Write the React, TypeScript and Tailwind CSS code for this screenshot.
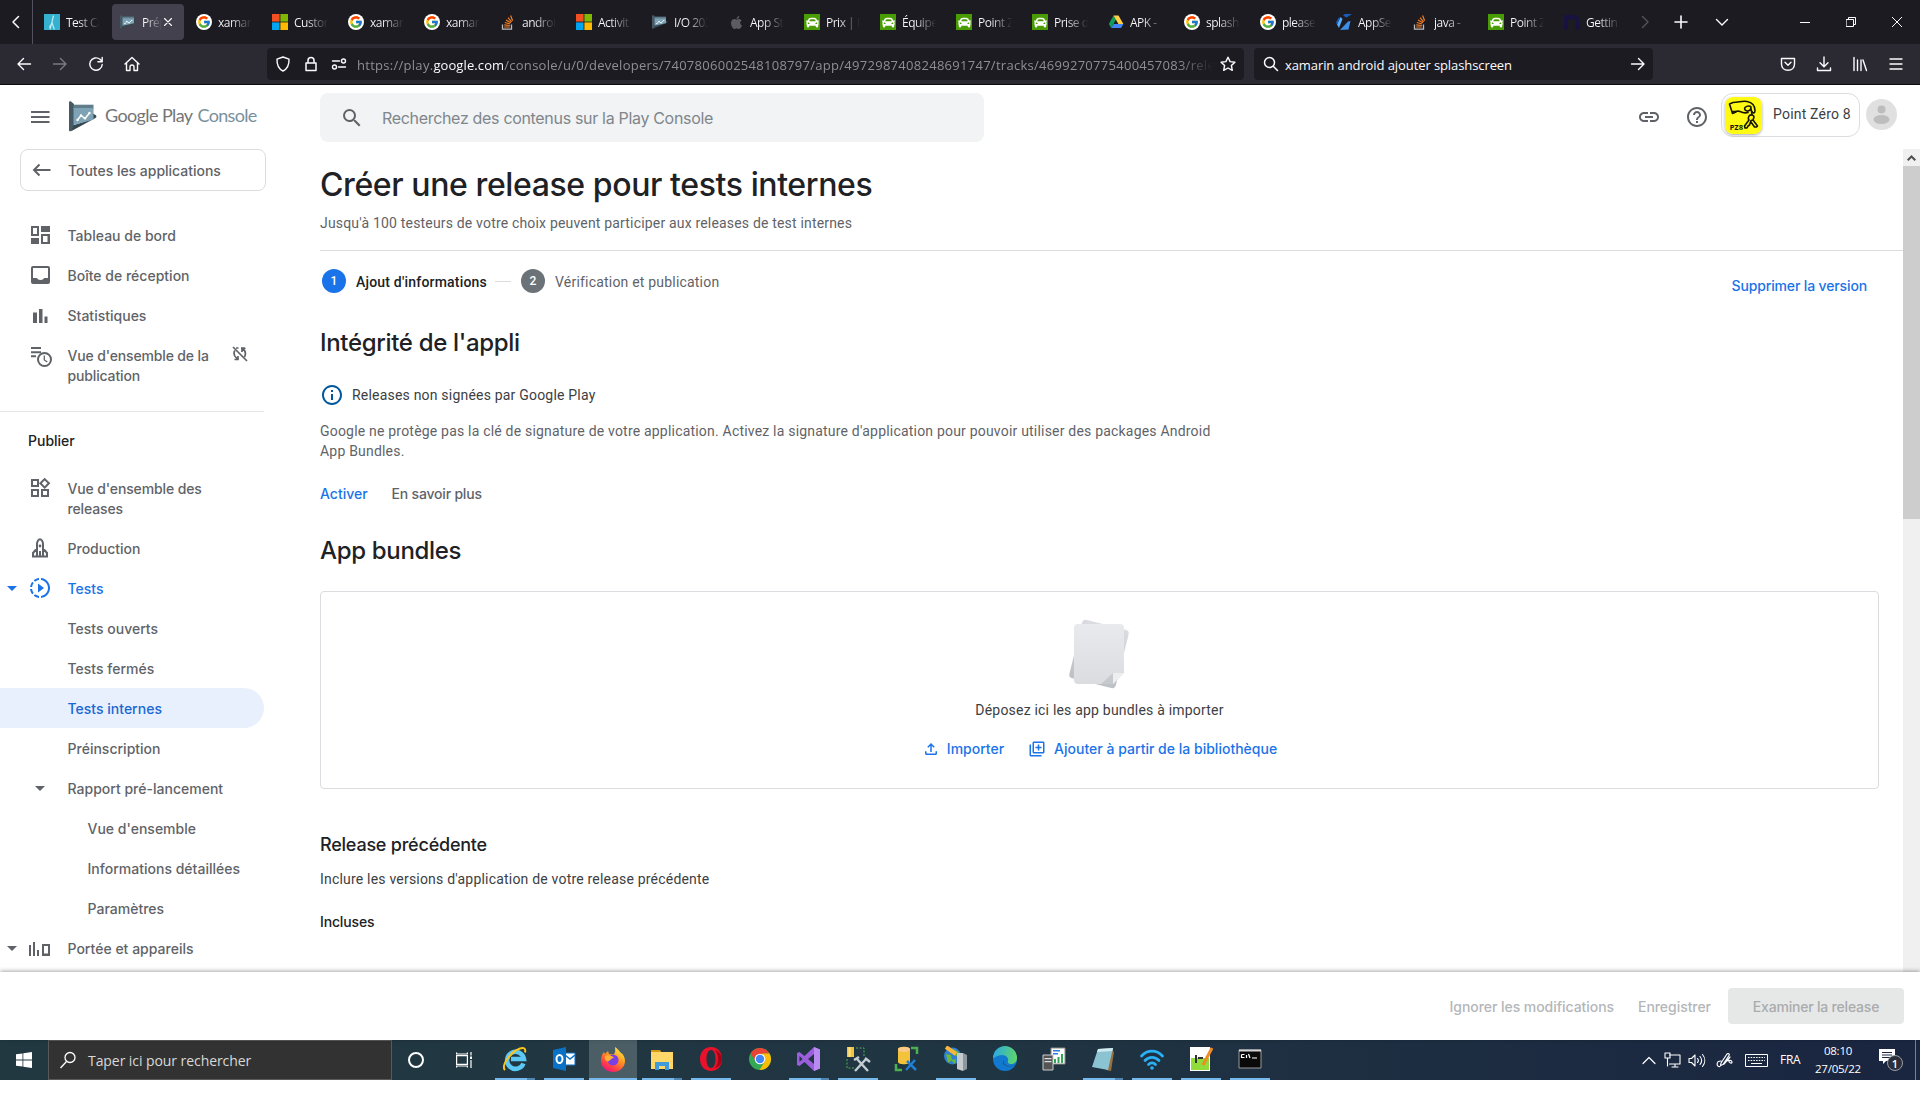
import type { ReactNode } from 'react';
import { FcGoogle } from 'react-icons/fc';
import { FaApple, FaCar } from 'react-icons/fa';
import {
  MdSearch, MdLink, MdHelpOutline, MdOutlineWidgets, MdSlowMotionVideo, MdInfoOutline,
  MdOutlineFileUpload, MdOutlineLibraryAdd,
} from 'react-icons/md';

/* ---------- favicons ---------- */

const GoogleFav = () => (
  <span className="flex size-4 items-center justify-center rounded-full bg-white"><FcGoogle size={14} /></span>
);
const MsFav = () => (
  <svg width="16" height="16"><path fill="#f25022" d="M0 0h7.6v7.6H0z" /><path fill="#7fba00" d="M8.4 0H16v7.6H8.4z" /><path fill="#00a4ef" d="M0 8.4h7.6V16H0z" /><path fill="#ffb900" d="M8.4 8.4H16V16H8.4z" /></svg>
);
const CarFav = () => (
  <span className="flex size-4 items-center justify-center bg-[#4a9c05] text-white"><FaCar size={13} /></span>
);
const StackFav = () => (
  <svg width="16" height="16" viewBox="0 0 16 16" fill="none">
    <path d="M2.5 10.5v4.6h9v-4.6" stroke="#bcbbbb" strokeWidth="1.3" />
    <path d="M4.2 13h5.6M4.3 10.9l5.5.6M4.8 8.5l5.4 1.5M6 6l4.9 2.8M8 3.6l3.6 4.2M10.6 1.5l2 5.3" stroke="#f48024" strokeWidth="1.2" />
  </svg>
);
const DriveFav = () => (
  <svg width="16" height="16" viewBox="0 0 16 16"><path fill="#0f9d58" d="M5.5 1.5 0.8 10 3.2 14 8 5.6z" /><path fill="#ffcf48" d="M5.5 1.5h5L15.4 10h-5z" /><path fill="#4285f4" d="M5.6 10h9.8L13 14H3.2z" /></svg>
);
const TestFav = () => (
  <svg width="16" height="16"><path fill="#35b0cf" d="M0 0h16v16H0z" /><path d="M9.500 1.500 8 8l-2 7.500M8 8.500l2.300 7M7 10.500l-1.700 3" stroke="#b8ecf7" strokeWidth="1.200" fill="none" /></svg>
);
const AzureFav = () => (
  <svg width="16" height="16" viewBox="0 0 16 16"><path fill="#1b5dbf" d="M7 1.500 9 0h7l-5.500 3.500z" /><path fill="#5aaef5" d="M4.500 3 6.500 5 3 14 1 10.500z" /><path fill="#1b5dbf" d="M1 10.500 4.500 3 2.500 4 0 8.500z" /><path fill="#3d8fe6" d="M12 7.500l2.500-.5-2 8.500L4 16z" /></svg>
);
const NFav = () => (
  <svg width="16" height="16"><path d="M2 15.500V1M2 6.500C4 1.500 13.500 1 13.500 7v8.500" stroke="#17123f" strokeWidth="4" fill="none" /></svg>
);
const PlayLogo = ({ size }: { size: 'sm' | 'lg' }) => (
  <svg className={size === 'sm' ? 'h-[14px] w-4' : 'h-[31px] w-[28px]'} viewBox="0 0 28 31" preserveAspectRatio="none">
    <path fill="#455a64" d="M0 1.5C0 .3 1 0 2 .6L5 3v25l-3 2c-1 .6-2 .2-2-1z" />
    <path fill="#37474f" d="M2 30.2 26.5 17c1.3-.8 1.3-2.2 0-3L24 12.400V18L5 24z" />
    <path fill="#607d8b" d="M4.500 3.700H24.500V8H4.500z" />
    <path fill="#7da3b5" d="M4.500 7H24.500V18.500L4.500 24z" />
    <path d="m8.500 19 3.500-4.500 4 3 4.500-5.500" stroke="#fff" strokeWidth="1.500" fill="none" />
    <g fill="#fff"><circle cx="8.500" cy="19" r="1.200" /><circle cx="12" cy="14.500" r="1.200" /><circle cx="16" cy="17.300" r="1.200" /><circle cx="20.500" cy="12" r="1.200" /></g>
  </svg>
);

const tabs: { icon: ReactNode; title: string; active?: boolean }[] = [
  { icon: <TestFav />, title: 'Test Ca' },
  { icon: <PlayLogo size="sm" />, title: 'Prép', active: true },
  { icon: <GoogleFav />, title: 'xamari' },
  { icon: <MsFav />, title: 'Custom' },
  { icon: <GoogleFav />, title: 'xamari' },
  { icon: <GoogleFav />, title: 'xamari' },
  { icon: <StackFav />, title: 'androi' },
  { icon: <MsFav />, title: 'Activit' },
  { icon: <PlayLogo size="sm" />, title: 'I/O 202' },
  { icon: <FaApple size={15} color="#5b5b60" />, title: 'App St' },
  { icon: <CarFav />, title: 'Prix | P' },
  { icon: <CarFav />, title: 'Équipe' },
  { icon: <CarFav />, title: 'Point Z' },
  { icon: <CarFav />, title: 'Prise d' },
  { icon: <DriveFav />, title: 'APK - ' },
  { icon: <GoogleFav />, title: 'splash' },
  { icon: <GoogleFav />, title: 'please' },
  { icon: <AzureFav />, title: 'AppSe' },
  { icon: <StackFav />, title: 'java - ' },
  { icon: <CarFav />, title: 'Point Z' },
  { icon: <NFav />, title: 'Gettin' },
];

/* Thin-line glyph used throughout the browser chrome */
const Line = ({ d, w = 16, h = 16, sw = 1.4, className = '' }: { d: string; w?: number; h?: number; sw?: number; className?: string }) => (
  <svg className={`shrink-0 ${className}`} width={w} height={h} viewBox={`0 0 ${w} ${h}`} fill="none" stroke="currentColor" strokeWidth={sw} strokeLinecap="round" strokeLinejoin="round"><path d={d} /></svg>
);

const TabBar = () => (
  <div className="flex h-11 items-center bg-[#1c1b22] text-[#fbfbfe]">
    <div className="flex h-11 w-[33px] items-center justify-center border-r border-[#52525e]"><Line d="M10.500 2.500 5 8l5.500 5.500" sw={1.500} /></div>
    <div className="ml-px flex">
      {tabs.map((t, i) => (
        <div key={i} className="flex h-11 w-[76px] items-center px-[2px]">
          <div className={`flex h-9 w-[72px] items-center rounded-[4px] pl-2 ${t.active ? 'bg-[#42414d]' : ''}`}>
            <span className="flex size-4 shrink-0 items-center justify-center">{t.icon}</span>
            <span className={`mt-px ml-1.5 overflow-hidden bg-clip-text text-xs leading-5 tracking-[-0.5px] whitespace-nowrap text-transparent ${t.active ? 'w-5 bg-linear-to-r from-[#fbfbfe] from-20% to-[#fbfbfe00]' : 'w-[34px] bg-linear-to-r from-[#fbfbfe] from-35% to-[#fbfbfe00]'}`}>{t.title}</span>
            {t.active && <Line d="M1.500 1.500l7 7M8.500 1.500l-7 7" w={10} h={10} sw={1.100} className="ml-px" />}
          </div>
        </div>
      ))}
    </div>
    <Line d="M5.500 2.500 11 8l-5.500 5.500" className="ml-[7px] text-[#55545c]" />
    <Line d="M8 2v12M2 8h12" sw={1.600} className="ml-5" />
    <Line d="M2.500 5.500 8 11l5.500-5.500" className="ml-[25px]" />
    <Line d="M0 5.500h10" w={10} h={10} sw={1} className="ml-[70px]" />
    <Line d="M.5 2.500h7v7h-7zM2.500 2.500v-2h7v7h-2" w={10} h={10} sw={1} className="ml-9" />
    <Line d="M0 0l10 10M10 0L0 10" w={10} h={10} sw={1} className="ml-9" />
  </div>
);

const NavBar = () => (
  <div className="flex h-[41px] items-center border-b border-[#0c0c0d] bg-[#2b2a33] text-[#fbfbfe]">
    <Line d="M14.500 8H2M7.500 2.500 2 8l5.500 5.500" className="ml-4" />
    <Line d="M1.500 8H14M8.500 2.500 14 8l-5.500 5.500" className="ml-5 text-[#7b7a82]" />
    <Line d="M14.200 8.500A6.200 6.200 0 1 1 12 3.300l1.700 1.700M14.200 1.500v4.300H9.900" className="ml-5" />
    <Line d="M1 8 8 1.500 15 8M2.500 6.800v7.700H6V11a2 2 0 0 1 4 0v3.500h3.500V6.800" className="ml-5" />
    <div className="ml-[127px] flex h-8 w-[977px] items-center rounded-[4px] bg-[#1c1b22]">
      <Line d="M8 1 14 3.200c.2 5-1.500 9.600-6 11.800C3.500 12.800 1.800 8.200 2 3.200z" className="ml-2" />
      <Line d="M3 7h10v7.500H3zM5 7V4.500a3 3 0 0 1 6 0V7" sw={1.500} className="ml-3" />
      <Line d="M1.500 5h7M7.500 11h7M10.500 5a2 2 0 1 0 4 0 2 2 0 0 0-4 0M1.500 11a2 2 0 1 0 4 0 2 2 0 0 0-4 0" className="ml-3" />
      <div className="mt-0.5 ml-[10px] w-[856px] overflow-hidden mask-r-from-96% mask-r-to-100% text-[13px] leading-5 tracking-[0.28px] whitespace-nowrap text-[#8f8e96]">
        https://play.<span className="tracking-[0.1px] text-[#fbfbfe]">google.com</span>/console/u/0/developers/7407806002548108797/app/4972987408248691747/tracks/4699270775400457083/releases
      </div>
      <Line d="M8 1.200l2.100 4.400 4.800.6-3.500 3.300.9 4.800L8 12l-4.300 2.300.9-4.800L1.100 6.200l4.800-.6z" className="ml-[7px]" />
    </div>
    <div className="ml-[10px] flex h-8 w-[399px] items-center rounded-[4px] bg-[#1c1b22]">
      <Line d="M11.500 6.500a5 5 0 1 1-10 0 5 5 0 0 1 10 0M10 10l4.500 4.500" sw={1.500} className="ml-[9px]" />
      <span className="mt-0.5 ml-[6px] w-[340px] text-[13px] leading-5 tracking-[-0.09px]">xamarin android ajouter splashscreen</span>
      <Line d="M1.500 8H14M8.500 2.500 14 8l-5.500 5.500" className="ml-[5px]" />
    </div>
    <Line d="M1.500 2.500h13V8c0 3.500-2.500 6.200-6.500 6.200S1.500 11.500 1.500 8zM5 6.200l3 3 3-3" className="ml-[127px]" />
    <Line d="M8 1v9.500M4 6.800l4 4 4-4M1.500 12v2.500h13V12" className="ml-[20px]" />
    <Line d="M2 1.500v13M5.500 4v10.500M9 4v10.500M11 4l3.500 10.500" className="ml-[20px]" />
    <Line d="M2 3h12M2 8h12M2 13h12" className="ml-[20px]" />
  </div>
);

/* ---------- console header ---------- */

const ConsoleHeader = () => (
  <header className="flex h-16 shrink-0 items-start">
    <svg className="mt-[25px] ml-[31px]" width="19" height="14" fill="#5f6368"><path d="M0 1h18.500v2H0zM0 6h18.500v2H0zM0 11h18.500v2H0z" /></svg>
    <div className="mt-4 ml-[19px]"><PlayLogo size="lg" /></div>
    <div className="mt-4 ml-2 flex h-7 w-[215px] items-center gap-[5px] font-['Lato',sans-serif] text-[18px] whitespace-nowrap">
      <span className="tracking-[-0.6px] text-[#757575]">Google Play</span>
      <span className="tracking-[-0.7px] text-[#78909c]">Console</span>
    </div>
    <div className="mt-2 flex h-[49px] w-[664px] items-center rounded-lg bg-[#f1f3f4] pl-5">
      <MdSearch size={24} color="#5f6368" />
      <span className="ml-[18px] text-base tracking-[-0.32px] text-[#80868b]">Recherchez des contenus sur la Play Console</span>
    </div>
    <MdLink className="mt-5 ml-[653px]" size={24} color="#5f6368" />
    <MdHelpOutline className="mt-5 ml-6" size={24} color="#5f6368" />
    <div className="mt-2 ml-3 flex h-11 w-[139px] items-start rounded-xl border border-[#dadce0]">
      <svg className="mt-[3px] ml-[3px] rounded-[8px] shadow-[0_1px_3px_rgba(0,0,0,0.35)]" width="37" height="37" viewBox="0 0 37 37">
        <rect width="37" height="37" rx="7" fill="#fffa14" />
        <g fill="none" stroke="#151500" strokeWidth="1.600" strokeLinejoin="round" strokeLinecap="round">
          <path d="M8 5.500 4.500 7l3 9.500L11 15M8 5.500c6 0 9-2 14-1 5 1 8 4 8 9 0 3-2 3-3 1M8 14.500c4 0 5-1 7 0s4 2 8 1" />
          <path d="M20 10.500c2-2 6-2 6 0s-2 4-4 3.500-3-2-2-3.500M26 11.500l1 6" />
          <path d="M24 19c2-2 5-1 5 1l-1 3 4.500 6-1 1-2 0-3.500-5M24 19c-1 2-1 3 0 4l-4.500 6 .5 2h2l1-2 1.500-1 1.500-4.500 2-.5" />
        </g>
        <text x="5" y="32.500" fontSize="6.500" fontWeight="800" fill="#151500">PZ8</text>
      </svg>
      <span className="mt-[10px] ml-[11px] font-['Roboto'] text-sm leading-5 tracking-[0.2px] whitespace-nowrap text-[#3c4043]">Point Zéro 8</span>
    </div>
    <span className="mt-[14px] ml-[6px] flex size-[31px] items-center justify-center rounded-full bg-[#e0e0e0]">
      <svg width="31" height="31" fill="#bdbdbd"><circle cx="15.500" cy="10.500" r="4" /><ellipse cx="15.500" cy="20.500" rx="8" ry="4.500" /></svg>
    </span>
  </header>
);

/* ---------- sidebar ---------- */

const G = ({ children }: { children: ReactNode }) => <svg width="24" height="24" viewBox="0 0 24 24" fill="currentColor">{children}</svg>;
const Dashboard = () => <G><path fillRule="evenodd" d="M3 3h8v10H3zM5 5v6h4V5zM13 3h9v6h-9zM3 15h8v6H3zM13 11h9v10h-9zM15 13v6h4.500v-6z" /></G>;
const Inbox = () => <G><path fillRule="evenodd" d="M5 3h15a2 2 0 0 1 2 2v14a2 2 0 0 1-2 2H5a2 2 0 0 1-2-2V5c0-1.100.9-2 2-2zM5 5v10h4c.3 1.300 1.500 2 3.500 2s3.200-.7 3.500-2h4V5z" /></G>;
const Stats = () => <G><path d="M5 9.500h4V20H5zM11 6h3.500v14H11zM16.500 13.500h3V20h-3z" /></G>;
const Timeline = () => (
  <svg className="mt-1 shrink-0" width="26" height="26" viewBox="0 0 26 26" fill="currentColor"><path d="M3 3h10v2H3zM3 7.200h10v2H3zM3 11.200h5v2H3z" /><circle cx="16.500" cy="15.500" r="6.500" fill="none" stroke="currentColor" strokeWidth="2" /><path d="M16.300 11.500V16l3 2" fill="none" stroke="currentColor" strokeWidth="1.300" /></svg>
);
const SyncOff = () => (
  <svg className="mt-px ml-[6px]" width="16" height="16" viewBox="0 0 16 16" fill="none" stroke="currentColor" strokeWidth="1.700"><path d="m1 1 14 14M6.500 2H4M9 2h4M13.500 2.500H10V6M11 3c2.500 2 3 5 1.500 8M2.800 4.500c-1.500 3-.5 6 2.200 8M2.500 13.500H6V10" /></svg>
);
const Rocket = () => (
  <G><path d="M9 20.500V8c0-2.500 1.500-4.800 3-4.800S15 5.500 15 8v12.500M9 12.500 5 17v3.500h14V17l-4-4.500M12 15v5.500" fill="none" stroke="currentColor" strokeWidth="2" /><circle cx="12" cy="10" r="1.400" /></G>
);
const Reach = () => (
  <G><path fillRule="evenodd" d="M1 9h2v11H1zM5 6h2v14H5zM9 14h2v6H9zM14 8h8v12h-8zM16 10v7.500h4V10z" /></G>
);
const Caret = () => <svg width="10" height="5" fill="currentColor"><path d="M0 0h10L5 5z" /></svg>;

function NavItem({ icon, label, caret, active, selected, tall, indent, trailing }: {
  icon?: ReactNode; label: ReactNode; caret?: boolean; active?: boolean; selected?: boolean; tall?: boolean; indent?: boolean; trailing?: ReactNode;
}) {
  return (
    <div className={`flex w-[264px] shrink-0 items-start pt-[10px] ${tall ? 'h-[60px]' : 'h-10'} ${selected ? 'rounded-r-full bg-[#e8f0fe] text-[#1967d2]' : active ? 'text-[#1a73e8]' : 'text-[#5f6368]'}`}>
      <span className="flex h-5 w-7 items-center pl-[7px]">{caret && <Caret />}</span>
      <span className="flex h-5 w-[39.5px] items-center">{icon}</span>
      <span className={`mt-[0.5px] w-[158px] text-sm leading-5 font-[550] tracking-[0.01px] whitespace-nowrap ${indent ? 'pl-5' : ''}`}>{label}</span>
      {trailing}
    </div>
  );
}

const Sidebar = () => (
  <nav className="flex w-80 shrink-0 flex-col overflow-hidden">
    <div className="ml-5 flex h-[42px] w-[246px] shrink-0 items-center rounded-lg border border-[#dadce0] text-[#5f6368]">
      <svg className="ml-[11px]" width="19" height="14" fill="none" stroke="currentColor" strokeWidth="2"><path d="M18.500 7H2M7.500 1.500 2 7l5.500 5.500" /></svg>
      <span className="mt-px ml-[17px] text-sm font-[550] tracking-[-0.02px]">Toutes les applications</span>
    </div>
    <div className="mt-6 flex shrink-0 flex-col">
      <NavItem icon={<Dashboard />} label="Tableau de bord" />
      <NavItem icon={<Inbox />} label="Boîte de réception" />
      <NavItem icon={<Stats />} label="Statistiques" />
      <NavItem tall icon={<Timeline />} label={<span className="tracking-[-0.15px]">Vue d'ensemble de la<br />publication</span>} trailing={<SyncOff />} />
    </div>
    <div className="mt-4 h-px w-[264px] shrink-0 bg-[#e4e6e8]" />
    <div className="mt-[18px] ml-7 shrink-0 text-sm leading-[21px] font-[550] text-[#202124]">Publier</div>
    <div className="mt-[17px] flex shrink-0 flex-col">
      <NavItem tall icon={<MdOutlineWidgets size={24} />} label={<span className="tracking-[-0.13px]">Vue d'ensemble des<br />releases</span>} />
      <NavItem icon={<Rocket />} label="Production" />
      <NavItem caret active icon={<MdSlowMotionVideo size={24} />} label="Tests" />
      <NavItem label="Tests ouverts" />
      <NavItem label="Tests fermés" />
      <NavItem selected label="Tests internes" />
      <NavItem label="Préinscription" />
      <NavItem icon={<span className="pl-[7px]"><Caret /></span>} label="Rapport pré-lancement" />
      <NavItem indent label="Vue d'ensemble" />
      <NavItem indent label="Informations détaillées" />
      <NavItem indent label="Paramètres" />
      <NavItem caret icon={<Reach />} label="Portée et appareils" />
    </div>
  </nav>
);

/* ---------- main column ---------- */

const Papers = () => (
  <svg className="mr-px" width="62" height="70" viewBox="0 0 62 70">
    <defs>
      <linearGradient id="back" x1="0" y1="0" x2="0" y2="1"><stop offset="0" stopColor="#dadce0" /><stop offset="1" stopColor="#bdc1c6" /></linearGradient>
      <linearGradient id="front" x1="0" y1="0" x2="0" y2="1"><stop offset="0" stopColor="#e8eaed" /><stop offset="1" stopColor="#dadce0" /></linearGradient>
    </defs>
    <rect x="7" y="5" width="48" height="60" rx="4" fill="url(#back)" transform="rotate(14 31 35)" />
    <path d="M10 5h42a4 4 0 0 1 4 4v45L45 65H10a4 4 0 0 1-4-4V9a4 4 0 0 1 4-4z" fill="url(#front)" />
    <path d="M45 54 33 65h12z" fill="#c6cace" /><path d="M45 54h11L45 65z" fill="#eceef0" />
  </svg>
);

const Main = () => (
  <main className="flex min-w-0 flex-1 flex-col overflow-hidden text-[#202124]">
    <h1 className="mt-4 text-[32px] leading-10 font-[450] tracking-[-0.4px]">Créer une release pour tests internes</h1>
    <p className="mt-2 font-['Roboto'] text-sm leading-5 tracking-[0.18px] text-[#5f6368]">Jusqu'à 100 testeurs de votre choix peuvent participer aux releases de test internes</p>
    <div className="mt-[17px] h-px shrink-0 bg-[#dadce0]" />
    <div className="mt-[18px] flex h-6 items-center pl-0.5 font-['Roboto'] text-sm leading-6 tracking-[0.2px]">
      <span className="flex size-6 items-center justify-center rounded-full bg-[#1a73e8] text-xs font-medium text-white">1</span>
      <span className="mt-0.5 ml-[10px] w-[139px] font-medium">Ajout d'informations</span>
      <span className="h-px w-4 bg-[#dadce0]" />
      <span className="ml-[10px] flex size-6 items-center justify-center rounded-full bg-[#6c7378] text-xs font-medium text-white">2</span>
      <span className="mt-0.5 ml-[10px] text-[#5f6368]">Vérification et publication</span>
      <span className="mt-[10px] mr-9 ml-auto font-['Inter'] font-[550] tracking-[-0.14px] text-[#1a73e8]">Supprimer la version</span>
    </div>
    <h2 className="mt-[34px] text-2xl leading-8 font-[450] tracking-[-0.33px]">Intégrité de l'appli</h2>
    <div className="mt-[26px] flex h-5 items-center font-['Roboto'] text-sm leading-5 tracking-[0.2px] text-[#3c4043]">
      <MdInfoOutline size={24} color="#01579b" /><span className="ml-2">Releases non signées par Google Play</span>
    </div>
    <p className="mt-4 w-[900px] font-['Roboto'] text-sm leading-5 tracking-[0.2px] text-[#5f6368]">Google ne protège pas la clé de signature de votre application. Activez la signature d'application pour pouvoir utiliser des packages Android App Bundles.</p>
    <div className="mt-[22.5px] flex gap-6 text-sm leading-5 font-[550]">
      <span className="text-[#1a73e8]">Activer</span><span className="tracking-[-0.2px] text-[#5f6368]">En savoir plus</span>
    </div>
    <h2 className="mt-[31.5px] text-2xl leading-8 font-[450] tracking-[-0.33px]">App bundles</h2>
    <section className="mt-6 mr-6 flex h-[198px] shrink-0 flex-col items-center rounded-[4px] border border-[#dadce0] pt-[27px]">
      <Papers />
      <p className="mt-[11px] font-['Roboto'] text-sm leading-5 tracking-[0.2px] text-[#3c4043]">Déposez ici les app bundles à importer</p>
      <div className="mt-[18.5px] flex h-5 items-center text-sm leading-5 font-[550] text-[#1a73e8]">
        <MdOutlineFileUpload size={18} /><span className="ml-[7px]">Importer</span>
        <MdOutlineLibraryAdd className="ml-6" size={18} /><span className="ml-2 tracking-[0.01px]">Ajouter à partir de la bibliothèque</span>
      </div>
    </section>
    <h3 className="mt-11 text-lg leading-6 font-[450] tracking-[-0.22px]">Release précédente</h3>
    <p className="mt-3 font-['Roboto'] text-sm leading-5 tracking-[0.2px] text-[#3c4043]">Inclure les versions d'application de votre release précédente</p>
    <p className="mt-[22.5px] text-sm leading-5 font-[550] tracking-[-0.15px]">Incluses</p>
  </main>
);

const Scrollbar = () => (
  <div className="w-[17px] shrink-0 bg-[#f0f0f0]">
    <div className="flex h-[17px] items-center justify-center text-[#505050]"><svg width="9" height="6" fill="none" stroke="currentColor" strokeWidth="2"><path d="M.7 5.300 4.500 1.500l3.800 3.800" /></svg></div>
    <div className="h-[353px] bg-[#cdcdcd]" />
  </div>
);

const Footer = () => (
  <footer className="relative flex h-[68px] shrink-0 items-center justify-end bg-white pr-4 text-sm font-[550] text-[#b4b6b9] shadow-[0_-1px_4px_rgba(0,0,0,0.35)]">
    <span className="mt-px tracking-[-0.05px]">Ignorer les modifications</span>
    <span className="mt-px ml-6 w-[74px] tracking-[-0.05px]">Enregistrer</span>
    <span className="ml-4 flex h-9 w-44 items-center justify-center rounded-[4px] bg-[#e6e8e7] pt-px tracking-[-0.2px] text-[#a9abad]">Examiner la release</span>
  </footer>
);

/* ---------- taskbar ---------- */

const V = ({ children }: { children: ReactNode }) => <svg width="26" height="26" viewBox="0 0 26 26">{children}</svg>;
const Ie = () => <V><path d="M21.500 17.500A8.500 8.500 0 1 1 22 13H9" fill="none" stroke="#5cc8f5" strokeWidth="4.500" /><path d="M3 24C-1 20 8 6 18 2.500c4-1.200 6 0 5 4" fill="none" stroke="#f9c51d" strokeWidth="2" /></V>;
const Outlook = () => <V><path fill="#fff" stroke="#0a72c6" d="M13 7h11v12H13z" /><path d="m14 9 5 4 5-4" fill="none" stroke="#0a72c6" strokeWidth="1.500" /><path fill="#0a72c6" d="M2 4 15 1v24L2 22z" /><ellipse cx="8.500" cy="13" rx="3" ry="4" fill="none" stroke="#fff" strokeWidth="2" /></V>;
const Firefox = () => (
  <V>
    <defs><linearGradient id="fx" x1="0.800" y1="0" x2="0.200" y2="1"><stop offset="0" stopColor="#fff04a" /><stop offset=".4" stopColor="#ff9a1f" /><stop offset=".75" stopColor="#ff3d47" /><stop offset="1" stopColor="#e0118a" /></linearGradient></defs>
    <path fill="url(#fx)" d="M15 1c4 3 5 5 6 6 2 1 4 4 4 8a12 11 0 0 1-24 0c0-4 1-7 3-9l1 2 3-3 1 3c2 0 4 1 5 0 2-2 1-5 1-7z" />
    <circle cx="13" cy="14" r="5.500" fill="#7b3fe4" /><path fill="#ffb02e" d="M5 10c4-2 8 0 9 2-3 0-3 2-5 3s-5-1-4-5z" />
  </V>
);
const Explorer = () => <V><path fill="#d99a17" d="M2 4h9l2 3H2z" /><path fill="#ffd768" d="M2 6h22v17H2z" /><path fill="#3f9bdc" d="M6 16h14v8h-4v-4h-6v4H6z" /></V>;
const Opera = () => <V><path fillRule="evenodd" fill="#e8132b" d="M13 1c7 0 11 5.500 11 12s-4 12-11 12S2 19.500 2 13 6 1 13 1zm0 3c-3 0-4.500 4-4.500 9s1.500 9 4.500 9 4.500-4 4.500-9-1.500-9-4.500-9z" /><path fill="#a70014" d="M17 4c5 2 7 6 7 9s-2 8-7 9c4-5 4-13 0-18z" /></V>;
const Chrome = () => <V><circle cx="13" cy="13" r="11" fill="#34a853" /><path fill="#ea4335" d="M3.500 7.500a11 11 0 0 1 19 0L13 8l-4.500 7z" /><path fill="#fbbc05" d="M22.500 7.500A11 11 0 0 1 12.500 24L18 15l-3-7.500z" /><circle cx="13" cy="13" r="5.300" fill="#fff" /><circle cx="13" cy="13" r="4.200" fill="#4285f4" /></V>;
const VisualStudio = () => <V><path fill="#9b5fdd" fillRule="evenodd" d="M18 1l6 2.500v19L18 25 8.500 16 3.500 20 1 19V7l2.500-1 5 4zm0 7-6 5 6 5zM3.500 10v6l3-3z" /><path fill="#b98af0" d="m18 1 6 2.500v19L18 25z" /></V>;
const Tools = () => <path d="m12 13 11 12M21 13 10 25M9 14l5-3M20 12l5 4" stroke="#c3cdd4" strokeWidth="2.400" fill="none" />;
const Profiler = () => <V><path fill="#f3c33c" d="M2 1h7v10H2z" /><path fill="#fbe39a" d="M3.500 1h2v10h-2z" /><path d="M11 2h8v8M2 13v9h8" fill="none" stroke="#4caf50" strokeDasharray="2 1.500" /><Tools /></V>;
const Ssms = () => <V><path fill="#f3c33c" d="M4 3c0-3 12-3 12 0v13c0 3-12 3-12 0z" /><ellipse cx="10" cy="3.500" rx="6" ry="2.500" fill="#fbc98c" /><path d="M17 2h6v6M2 18v6h6" fill="none" stroke="#4caf50" strokeWidth="2.500" /><path d="m13 15 9 9M21 14l-9 10" stroke="#1f7fd0" strokeWidth="2.500" /></V>;
const Iis = () => <V><circle cx="9.500" cy="10" r="8.500" fill="#2f7fd6" /><path fill="#69b83b" d="M3 8l5 1 1 5-4 3zM10 3l6 3-3 5zM8 14l5-1-1 5z" /><path d="m3 1 10 7" stroke="#f6b73c" strokeWidth="4" /><path fill="#c4cace" d="M14 7h6v18l-6-2z" /><path fill="#8d979d" d="M20 7l4 2v14l-4 2z" /></V>;
const Edge = () => (
  <V>
    <defs><linearGradient id="eg" x1="0" y1=".3" x2="1" y2=".4"><stop offset="0" stopColor="#2aa8e6" /><stop offset="1" stopColor="#5ed66a" /></linearGradient></defs>
    <circle cx="13" cy="13" r="12" fill="#1179cf" /><path fill="url(#eg)" d="M1 12A12 12 0 0 1 25 12c0 4-3 6-6 6-2 0-4-1-3-3 1-3-2-6-6-6-5 0-9 4-9 3z" /><path fill="#22364a" d="M12.500 13c-2 2-1 6 3 7 3 .6 6 0 8-1.500-1 1-5 3-9 1.500-4-1.500-4-5-2-7z" />
  </V>
);
const Perf = () => <V><path fill="#fff" stroke="#888" d="M10 2h14v16H10z" /><path fill="#2b7de0" d="M12 4h7v1.500h-7zM12 7h5v1.500h-5z" /><path fill="#2fa84f" d="M13 13h2v4h-2zM16.500 11h2v6h-2zM20 8h2v9h-2z" /><path fill="#555" stroke="#ccc" d="M2 9h10v15H2z" /><path fill="#ddd" d="M3.500 12h7v1.200h-7zM3.500 15h7v1.200h-7z" /></V>;
const Notepad = () => <V><path fill="#98713e" d="m22 4 2 2-3 19-5-1z" /><path fill="#8cc3d3" d="M8 3 23 2 18 24 2 21z" /><path fill="#cfe9ef" d="M8 3 23 2l-.5 3L7 6z" /></V>;
const Wifi = () => <V><g fill="none" stroke="#29b0f5" strokeWidth="2.800" strokeLinecap="round"><path d="M2.500 10c6-6.500 15-6.500 21 0M6 14.500c4-4.300 10-4.300 14 0M9.500 18.500c2-2 5-2 7 0" /></g><circle cx="13" cy="22" r="1.800" fill="#29b0f5" /></V>;
const Npp = () => <V><path fill="#fff" d="M2 1h20v24H2z" /><path fill="#8fdc3a" d="M3 12h18v12H3z" /><path fill="#333" d="M7 9h2v8H7zM10 11h5v2h-5z" /><path d="m24 2-9 17" stroke="#f08a24" strokeWidth="3" /></V>;
const Cmd = () => <V><path fill="#0a0a0a" stroke="#9a9a9a" d="M2 4h22v18H2z" /><path fill="#d5d5d5" d="M2 3.500h22V5.500H2z" /><path d="M4.500 8.500h3M4.500 8.500v3h3M9.500 9v3M11.500 8l1.500 4M15 12h5" stroke="#fff" strokeWidth="1.200" fill="none" /></V>;

type App = { icon: ReactNode; run?: boolean; split?: boolean; focus?: boolean };
const apps: App[] = [
  { icon: <Ie />, run: true, split: true }, { icon: <Outlook />, run: true }, { icon: <Firefox />, run: true, focus: true },
  { icon: <Explorer />, run: true, split: true }, { icon: <Opera />, run: true }, { icon: <Chrome /> },
  { icon: <VisualStudio />, run: true, split: true }, { icon: <Profiler />, run: true }, { icon: <Ssms /> },
  { icon: <Iis />, run: true }, { icon: <Edge /> }, { icon: <Perf /> }, { icon: <Notepad />, run: true, split: true },
  { icon: <Wifi />, run: true }, { icon: <Npp />, run: true }, { icon: <Cmd />, run: true },
];

const Taskbar = () => (
  <div className="flex h-10 items-center bg-linear-to-r from-[#213840] via-[#203542] via-50% to-[#1a2540] text-white">
    <svg className="ml-4" width="16" height="16" fill="#fff"><path d="M0 2.300 6.500 1.400v6.200H0zM7.300 1.300 16 0v7.600H7.300zM0 8.400h6.500v6.200L0 13.700zM7.300 8.400H16V16l-8.700-1.300z" /></svg>
    <div className="ml-4 flex h-10 w-[344px] items-center border border-[#5a5a5a] bg-[#323232]">
      <svg className="ml-[10px]" width="18" height="18" fill="none" stroke="#fff" strokeWidth="1.300"><circle cx="11" cy="6.500" r="5" /><path d="M7.500 10.500 1.500 17" /></svg>
      <span className="mt-0.5 ml-[11px] text-sm tracking-[-0.07px] text-[#d8d8d8]">Taper ici pour rechercher</span>
    </div>
    <span className="ml-4 size-4 rounded-full border-2 border-white" />
    <svg className="ml-8" width="16" height="16" fill="none" stroke="#fff" strokeWidth="1.200"><path d="M.6 3.600h10.800v8.800H.6zM.6.500v1.500h10.800V.5M.6 15.500V14h10.800v1.500M15 0v3.500M15 8v8" /><path d="M15 4.500v2.500" strokeWidth="2" /></svg>
    <div className="ml-[18px] flex">
      {apps.map((a, i) => (
        <div key={i} className="flex h-10 w-[49px] justify-center">
          <div className={`flex h-10 flex-col items-center justify-between pt-[6px] ${a.focus ? 'w-12 bg-[#4b5e66]' : 'w-10'}`}>
            {a.icon}
            <div className="flex h-[2px] w-full">{a.run && <><span className="flex-1 bg-[#76b9ed]" />{a.split && <span className="w-2 bg-[#4f86b3]" />}</>}</div>
          </div>
        </div>
      ))}
    </div>
    <div className="mr-1 ml-auto flex h-10 items-center">
      <Line d="M1 7.500 7 1.500l6 6" w={14} h={9} sw={1.200} />
      <Line d="M5.500 3H16v9H5.500M1 1h5v5H1zM3.500 6v8M8 15h6M11 12v3" w={17} h={16} sw={1.100} className="ml-2" />
      <Line d="M1 5.500h2.500L7 2v11L3.500 9.500H1zM9.500 5.500c1 1.200 1 3 0 4M12 3.500c2 2.400 2 5.600 0 8M14.500 1.500c3 3.600 3 8.400 0 12" w={18} h={15} sw={1.100} className="ml-[7px]" />
      <Line d="M5 11 11 2c1-1 3 0 2 1.500L7 12.500l-2.500 1zM8 12 14 5M5 9c-5 0-5 6-1 5.500M10 9c3-1 6-1 6 1s-3 1-3-1" w={17} h={16} sw={1.200} className="ml-[10px]" />
      <svg className="ml-3" width="23" height="13" fill="none" stroke="#fff"><path d="M.5.500h22v12H.5z" /><path d="M3 3.500h17M3 6.500h17" strokeDasharray="1.500 1.200" /><path d="M6 9.500h11" /></svg>
      <span className="ml-3 w-[22px] text-xs tracking-[-0.3px]">FRA</span>
      <div className="ml-3 w-12 text-center text-[11.500px] leading-[18px] tracking-[-0.25px] whitespace-nowrap">08:10<br />27/05/22</div>
      <div className="relative ml-[17px] h-[22px] w-6">
        <svg width="16" height="16"><path fill="#fff" d="M0 0h16v12H7l-3 3v-3H0z" /><path d="M3 3.500h10M3 6h10M3 8.500h10" stroke="#1b2740" /></svg>
        <span className="absolute top-[6px] left-2 flex size-4 items-center justify-center rounded-full border border-[#9a9fa8] bg-[#2a2f3a] text-[11px] leading-none font-semibold">1</span>
      </div>
      <span className="ml-3 h-10 w-px bg-[#77809a]" />
    </div>
  </div>
);

export default function App() {
  return (
    <div className="flex h-[1096px] w-[1920px] flex-col overflow-hidden bg-white font-['Open_Sans',sans-serif]">
      <TabBar />
      <NavBar />
      <div className="flex h-[955px] flex-col font-['Inter',sans-serif]">
        <ConsoleHeader />
        <div className="flex h-[823px] shrink-0 overflow-hidden">
          <Sidebar />
          <Main />
          <Scrollbar />
        </div>
        <Footer />
      </div>
      <Taskbar />
    </div>
  );
}
